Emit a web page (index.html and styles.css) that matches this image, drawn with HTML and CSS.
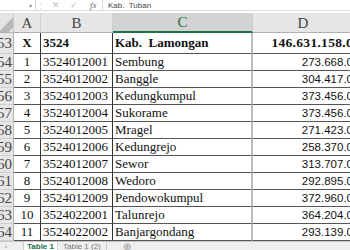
FILE: index.html
```html
<!DOCTYPE html>
<html lang="id">
<head>
    <meta charset="UTF-8">
    <title>Table 1</title>
    <link rel="stylesheet" href="styles.css">
</head>
<body>
    <div class="formula-bar">
        <div class="name-box"><span>37</span><span class="caret">&#9662;</span></div>
        <span class="grip">&#8942;</span>
        <div class="fx-buttons">
            <span class="btn">&#10005;</span>
            <span class="btn">&#10003;</span>
            <span class="fx">fx</span>
        </div>
        <div class="formula">Kab.&nbsp; Tuban</div>
    </div>

    <div class="sheet">
        <div class="corner"></div>
        <div class="col-head">A</div>
        <div class="col-head">B</div>
        <div class="col-head active">C</div>
        <div class="col-head last">D</div>

        <div class="row-head">53</div>
        <div class="cell center bold">X</div>
        <div class="cell bold">3524</div>
        <div class="cell bold">Kab.&nbsp; Lamongan</div>
        <div class="cell num bold total">146.631.158.0</div>

        <div class="row-head">54</div>
        <div class="cell center">1</div>
        <div class="cell">3524012001</div>
        <div class="cell">Sembung</div>
        <div class="cell num sans">273.668.0</div>

        <div class="row-head">55</div>
        <div class="cell center">2</div>
        <div class="cell">3524012002</div>
        <div class="cell">Banggle</div>
        <div class="cell num sans">304.417.0</div>

        <div class="row-head">56</div>
        <div class="cell center">3</div>
        <div class="cell">3524012003</div>
        <div class="cell">Kedungkumpul</div>
        <div class="cell num sans">373.456.0</div>

        <div class="row-head">57</div>
        <div class="cell center">4</div>
        <div class="cell">3524012004</div>
        <div class="cell">Sukorame</div>
        <div class="cell num sans">373.456.0</div>

        <div class="row-head">58</div>
        <div class="cell center">5</div>
        <div class="cell">3524012005</div>
        <div class="cell">Mragel</div>
        <div class="cell num sans">271.423.0</div>

        <div class="row-head">59</div>
        <div class="cell center">6</div>
        <div class="cell">3524012006</div>
        <div class="cell">Kedungrejo</div>
        <div class="cell num sans">258.370.0</div>

        <div class="row-head">60</div>
        <div class="cell center">7</div>
        <div class="cell">3524012007</div>
        <div class="cell">Sewor</div>
        <div class="cell num sans">313.707.0</div>

        <div class="row-head">61</div>
        <div class="cell center">8</div>
        <div class="cell">3524012008</div>
        <div class="cell">Wedoro</div>
        <div class="cell num sans">292.895.0</div>

        <div class="row-head">62</div>
        <div class="cell center">9</div>
        <div class="cell">3524012009</div>
        <div class="cell">Pendowokumpul</div>
        <div class="cell num sans">372.960.0</div>

        <div class="row-head">63</div>
        <div class="cell center">10</div>
        <div class="cell">3524022001</div>
        <div class="cell">Talunrejo</div>
        <div class="cell num sans">364.204.0</div>

        <div class="row-head">64</div>
        <div class="cell center">11</div>
        <div class="cell">3524022002</div>
        <div class="cell">Banjargondang</div>
        <div class="cell num sans">293.139.0</div>
    </div>

    <div class="tabs">
        <span class="nav">&#9664;</span>
        <span class="tab current">Table 1</span>
        <span class="tab">Table 1 (2)</span>
        <span class="add">&#8853;</span>
    </div>
</body>
</html>
```

FILE: styles.css
```css
html,
body {
    margin: 0;
    padding: 0;
}

body {
    width: 350px;
    height: 250px;
    overflow: hidden;
    background: #fff;
    font-family: "Liberation Serif", "Times New Roman", serif;
    color: #111;
}

/* formula bar */
.formula-bar {
    display: flex;
    align-items: center;
    height: 11px;
    margin-bottom: 2px;
    font-family: "Liberation Sans", Arial, sans-serif;
    font-size: 8px;
    color: #555;
    background: #fff;
    border-bottom: 1px solid #d8d8d8;
    box-sizing: border-box;
    overflow: hidden;
}

.name-box {
    display: flex;
    justify-content: space-between;
    align-items: center;
    width: 46px;
    margin-left: -10px;
    height: 100%;
    padding-right: 3px;
    box-sizing: border-box;
    border-right: 1px solid #d4d4d4;
}

.caret {
    font-size: 6px;
    color: #888;
}

.grip {
    width: 10px;
    text-align: center;
    color: #c4c4c4;
    font-size: 8px;
}

.fx-buttons {
    display: flex;
    align-items: center;
    width: 57px;
    height: 100%;
    padding-left: 6px;
    box-sizing: border-box;
    border-right: 1px solid #d4d4d4;
}

.btn {
    width: 18px;
    color: #c0c0c0;
    font-size: 9px;
}

.fx {
    margin-left: 2px;
    font-family: "Liberation Serif", serif;
    font-style: italic;
    font-size: 9px;
    color: #666;
}

.formula {
    padding-left: 5px;
    color: #444;
}

/* grid */
.sheet {
    display: grid;
    grid-template-columns: 14px 27px 72px 140px 100px;
    grid-template-rows: 20px 21px repeat(11, 17px);
}

.corner {
    background: #e4e4e4 linear-gradient(135deg, transparent 55%, #b8b8b8 55%, #b8b8b8 85%, transparent 85%) no-repeat;
    background-size: 100% 100%;
    border-right: 1px solid #c8c8c8;
    border-bottom: 1px solid #b0b0b0;
}

.col-head {
    display: flex;
    align-items: flex-end;
    justify-content: center;
    font-size: 15px;
    line-height: 17px;
    color: #444;
    background: #e6e6e6;
    border-right: 1px solid #cfcfcf;
    border-bottom: 1px solid #b0b0b0;
    box-sizing: border-box;
}

.col-head.active {
    color: #217346;
    background: #d3d3d3;
    border-bottom: 2px solid #217346;
}

.col-head.last {
    border-right: none;
}

.row-head {
    display: flex;
    align-items: center;
    justify-content: flex-end;
    padding-right: 1px;
    overflow: hidden;
    font-size: 15px;
    color: #444;
    background: #e6e6e6;
    border-right: 1px solid #b4b4b4;
    border-bottom: 1px solid #cfcfcf;
    box-sizing: border-box;
}

.cell {
    display: flex;
    align-items: center;
    padding: 0 2px;
    overflow: hidden;
    white-space: nowrap;
    font-size: 13px;
    border-right: 1px solid #333;
    border-bottom: 1px solid #555;
    box-sizing: border-box;
}

.cell:nth-child(5n+4) {
    border-right: 2px solid #bdbdbd;
}

.cell.center {
    justify-content: center;
}

.cell.num {
    justify-content: flex-end;
    padding-right: 0;
    border-right: none;
}

.cell.bold {
    font-weight: bold;
}

.cell.total {
    font-size: 13.5px;
    letter-spacing: 0.3px;
}

.cell.sans {
    font-family: "Liberation Sans", Arial, sans-serif;
    font-size: 11.5px;
}

/* sheet tabs */
.tabs {
    display: flex;
    align-items: flex-start;
    height: 9px;
    white-space: nowrap;
    font-family: "Liberation Sans", Arial, sans-serif;
    font-size: 8px;
    line-height: 9px;
    color: #777;
    background: #efefef;
    border-top: 1px solid #c6c6c6;
}

.nav {
    width: 24px;
    padding-left: 4px;
    font-size: 4px;
    color: #c0c0c0;
    box-sizing: border-box;
    border-right: 1px solid #cfcfcf;
}

.tab {
    padding: 0 5px;
    border-right: 1px solid #cfcfcf;
}

.tab.current {
    padding: 0 3px;
    font-weight: bold;
    color: #217346;
    background: #fff;
}

.add {
    margin-left: 16px;
    font-size: 10px;
    color: #999;
}
```
